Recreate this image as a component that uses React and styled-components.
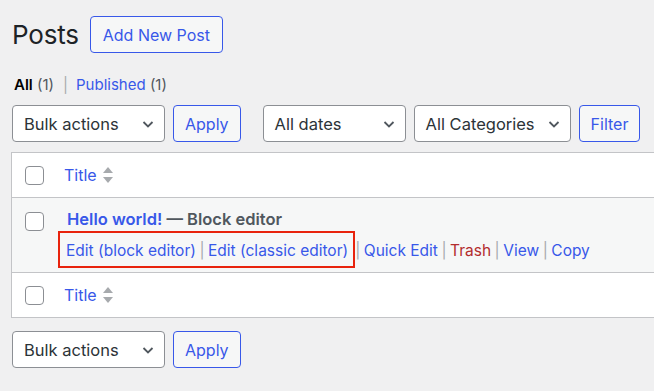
import React from 'react';
import styled, { createGlobalStyle } from 'styled-components';

const GlobalStyle = createGlobalStyle`
  html, body {
    margin: 0;
    padding: 0;
    background: #f0f0f1;
    overflow: hidden;
    font-family: Inter, "Noto Sans", sans-serif;
    color: #1d2327;
  }
`;

const Page = styled.div`
  width: 654px;
  height: 391px;
  padding-left: 12px;
  box-sizing: border-box;
`;

const Header = styled.div`
  display: flex;
  align-items: center;
  gap: 11px;
  padding-top: 16px;
`;

const Heading = styled.h1`
  margin: 0;
  font-size: 26px;
  font-weight: 400;
  letter-spacing: -0.2px;
`;

const Button = styled.button`
  font-family: inherit;
  font-size: ${p => p.$size || 15}px;
  color: #3858e9;
  background: #f6f7f7;
  border: 1px solid #3858e9;
  border-radius: 4px;
  height: 37px;
  padding: 0 ${p => p.$pad || 13}px;
  cursor: pointer;
  box-sizing: border-box;
`;

const Views = styled.div`
  display: flex;
  align-items: center;
  margin-top: 22px;
  padding-left: 2px;
  font-size: 15px;
  color: #50575e;
`;

const ViewLink = styled.span`
  color: ${p => (p.$current ? '#000' : '#3858e9')};
  font-weight: ${p => (p.$current ? 600 : 400)};
`;

const Pipe = styled.span`
  color: #a7aaad;
  margin: 0 8px 0 9px;
`;

const TableNav = styled.div`
  display: flex;
  align-items: center;
  gap: 8px;
  margin-top: ${p => p.$top}px;
`;

const Group = styled.div`
  display: flex;
  gap: 8px;
  margin-left: ${p => p.$gap || 0}px;
`;

const Select = styled.div`
  display: flex;
  align-items: center;
  justify-content: space-between;
  width: ${p => p.$w}px;
  height: 37px;
  box-sizing: border-box;
  padding: 0 8px 0 11px;
  background: #fff;
  border: 1px solid #8c8f94;
  border-radius: 4px;
  font-size: 16.5px;
  color: #2c3338;
`;

const Chevron = () => (
  <svg width="16" height="16" viewBox="0 0 16 16" fill="none">
    <path d="M3.5 6l4.5 4.5L12.5 6" stroke="#50575e" strokeWidth="1.8" />
  </svg>
);

const Table = styled.div`
  margin-top: 10px;
  margin-left: -1px;
  width: 720px;
  background: #fff;
  border: 1px solid #c3c4c7;
`;

const Row = styled.div`
  display: flex;
  align-items: ${p => (p.$post ? 'flex-start' : 'center')};
  height: ${p => p.$h}px;
  background: ${p => (p.$alt ? '#f6f7f7' : '#fff')};
  border-top: ${p => (p.$sep ? '1px solid #c3c4c7' : 'none')};
  box-sizing: border-box;
`;

const CheckCell = styled.div`
  width: 52px;
  padding-left: 13px;
  padding-top: ${p => p.$top || 0}px;
  box-sizing: border-box;
`;

const Checkbox = styled.span`
  display: block;
  width: 19px;
  height: 19px;
  box-sizing: border-box;
  border: 1px solid #8c8f94;
  border-radius: 4px;
  background: #fff;
`;

const SortLink = styled.div`
  display: flex;
  align-items: center;
  gap: 5px;
  font-size: 16px;
  color: #3858e9;
`;

const SortIcon = () => (
  <svg width="12" height="18" viewBox="0 0 12 18">
    <path d="M6 1l5 6H1z" fill="#a7aaad" />
    <path d="M6 17l5-6H1z" fill="#a7aaad" />
  </svg>
);

const PostCell = styled.div`
  padding-top: 11px;
  padding-left: 3px;
`;

const PostTitle = styled.div`
  font-size: 16.5px;
  font-weight: 600;
  color: #50575e;
`;

const TitleLink = styled.span`
  color: #3858e9;
`;

const Actions = styled.div`
  display: flex;
  align-items: baseline;
  margin-top: 2px;
  margin-left: -1px;
  font-size: 15.5px;
`;

const Highlight = styled.div`
  display: flex;
  align-items: baseline;
  margin-left: -8px;
  padding: 8px 5px 6px 6px;
  border: 2px solid #e8230d;
`;

const Action = styled.span`
  color: ${p => (p.$danger ? '#b32d2e' : '#3858e9')};
`;

const Sep = styled.span`
  color: #a7aaad;
  margin: 0 3.5px 0 ${p => (p.$tight ? 0 : 3.5)}px;
`;

const App = () => (
  <>
    <GlobalStyle />
    <Page>
      <Header>
        <Heading>Posts</Heading>
        <Button $size={16} $pad={12}>Add New Post</Button>
      </Header>

      <Views>
        <ViewLink $current>All</ViewLink>&nbsp;(1)
        <Pipe>|</Pipe>
        <ViewLink>Published</ViewLink>&nbsp;(1)
      </Views>

      <TableNav $top={11}>
        <Group>
          <Select $w={153}>Bulk actions<Chevron /></Select>
          <Button $size={16} $pad={11}>Apply</Button>
        </Group>
        <Group $gap={14}>
          <Select $w={143}>All dates<Chevron /></Select>
          <Select $w={157}>All Categories<Chevron /></Select>
          <Button $size={16} $pad={11}>Filter</Button>
        </Group>
      </TableNav>

      <Table>
        <Row $h={44}>
          <CheckCell><Checkbox /></CheckCell>
          <SortLink>Title<SortIcon /></SortLink>
        </Row>
        <Row $h={75} $alt $sep $post>
          <CheckCell $top={14}><Checkbox /></CheckCell>
          <PostCell>
            <PostTitle><TitleLink>Hello world!</TitleLink> — Block editor</PostTitle>
            <Actions>
              <Highlight>
                <Action>Edit (block editor)</Action>
                <Sep>|</Sep>
                <Action>Edit (classic editor)</Action>
              </Highlight>
              <Sep $tight>|</Sep>
              <Action>Quick Edit</Action>
              <Sep>|</Sep>
              <Action $danger>Trash</Action>
              <Sep>|</Sep>
              <Action>View</Action>
              <Sep>|</Sep>
              <Action>Copy</Action>
            </Actions>
          </PostCell>
        </Row>
        <Row $h={45} $sep>
          <CheckCell><Checkbox /></CheckCell>
          <SortLink>Title<SortIcon /></SortLink>
        </Row>
      </Table>

      <TableNav $top={13}>
        <Group>
          <Select $w={153}>Bulk actions<Chevron /></Select>
          <Button $size={16} $pad={11}>Apply</Button>
        </Group>
      </TableNav>
    </Page>
  </>
);

export default App;
